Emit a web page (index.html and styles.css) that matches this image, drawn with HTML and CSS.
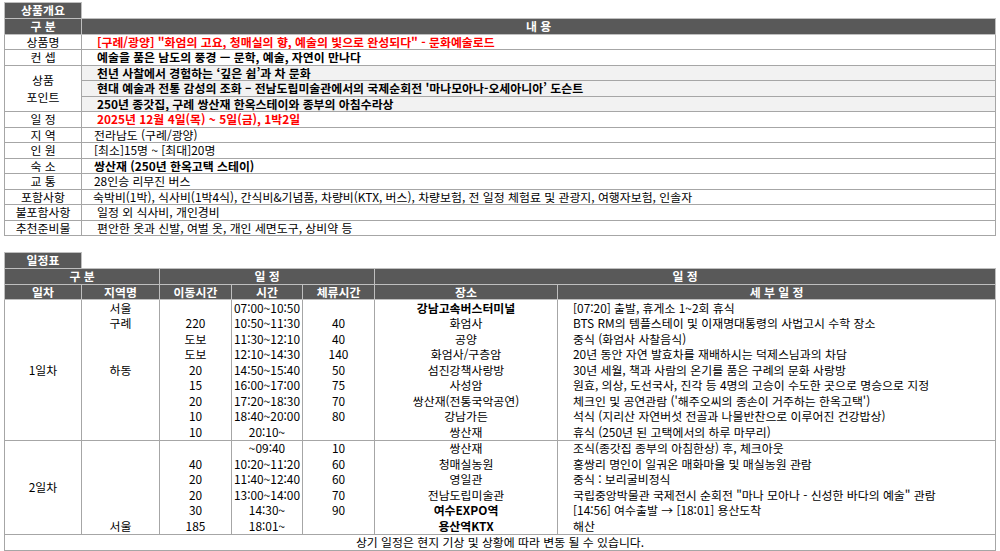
FILE: index.html
```html
<!DOCTYPE html>
<html lang="ko">
<head>
<meta charset="utf-8">
<title>상품개요</title>
<link rel="stylesheet" href="styles.css">
</head>
<body>
<div class="tab">상품개요</div>
<table class="summary">
  <colgroup><col class="c-label"><col></colgroup>
  <tr class="head"><th>구 분</th><th>내 용</th></tr>
  <tr><td class="label">상품명</td><td class="val red b">[구례/광양] "화엄의 고요, 청매실의 향, 예술의 빛으로 완성되다" - 문화예술로드</td></tr>
  <tr><td class="label">컨 셉</td><td class="val b">예술을 품은 남도의 풍경 — 문학, 예술, 자연이 만나다</td></tr>
  <tr><td class="label two" rowspan="3">상품<br>포인트</td><td class="val b shade">천년 사찰에서 경험하는 ‘깊은 쉼’과 차 문화</td></tr>
  <tr><td class="val b shade">현대 예술과 전통 감성의 조화 – 전남도립미술관에서의 국제순회전 '마나모아나-오세아니아’ 도슨트</td></tr>
  <tr><td class="val b shade">250년 종갓집, 구례 쌍산재 한옥스테이와 종부의 아침수라상</td></tr>
  <tr><td class="label">일 정</td><td class="val red b">2025년 12월 4일(목) ~ 5일(금), 1박2일</td></tr>
  <tr><td class="label">지 역</td><td class="val near">전라남도 (구례/광양)</td></tr>
  <tr><td class="label">인 원</td><td class="val near">[최소]15명 ~ [최대]20명</td></tr>
  <tr><td class="label">숙 소</td><td class="val near b">쌍산재 (250년 한옥고택 스테이)</td></tr>
  <tr><td class="label">교 통</td><td class="val near">28인승 리무진 버스</td></tr>
  <tr><td class="label">포함사항</td><td class="val nearer">숙박비(1박), 식사비(1박4식), 간식비&amp;기념품, 차량비(KTX, 버스), 차량보험, 전 일정 체험료 및 관광지, 여행자보험, 인솔자</td></tr>
  <tr><td class="label">불포함사항</td><td class="val">일정 외 식사비, 개인경비</td></tr>
  <tr><td class="label">추천준비물</td><td class="val">편안한 옷과 신발, 여벌 옷, 개인 세면도구, 상비약 등</td></tr>
</table>

<div class="tab tab2">일정표</div>
<table class="sched">
  <colgroup>
    <col class="w-day"><col class="w-area"><col class="w-move"><col class="w-time"><col class="w-stay"><col class="w-place"><col>
  </colgroup>
  <tr class="head"><th colspan="2">구 분</th><th colspan="3">일 정</th><th colspan="2">일 정</th></tr>
  <tr class="head"><th>일차</th><th>지역명</th><th>이동시간</th><th>시간</th><th>체류시간</th><th>장소</th><th>세 부 일 정</th></tr>

  <tr class="first"><td rowspan="9">1일차</td><td>서울</td><td></td><td>07:00~10:50</td><td></td><td class="b">강남고속버스터미널</td><td class="detail">[07:20] 출발, 휴게소 1~2회 휴식</td></tr>
  <tr><td>구례</td><td>220</td><td>10:50~11:30</td><td>40</td><td>화엄사</td><td class="detail">BTS RM의 템플스테이 및 이재명대통령의 사법고시 수학 장소</td></tr>
  <tr><td></td><td>도보</td><td>11:30~12:10</td><td>40</td><td>공양</td><td class="detail">중식 (화엄사 사찰음식)</td></tr>
  <tr><td></td><td>도보</td><td>12:10~14:30</td><td>140</td><td>화엄사/구층암</td><td class="detail">20년 동안 자연 발효차를 재배하시는 덕제스님과의 차담</td></tr>
  <tr><td>하동</td><td>20</td><td>14:50~15:40</td><td>50</td><td>섬진강책사랑방</td><td class="detail">30년 세월, 책과 사람의 온기를 품은 구례의 문화 사랑방</td></tr>
  <tr><td></td><td>15</td><td>16:00~17:00</td><td>75</td><td>사성암</td><td class="detail">원효, 의상, 도선국사, 진각 등 4명의 고승이 수도한 곳으로 명승으로 지정</td></tr>
  <tr><td></td><td>20</td><td>17:20~18:30</td><td>70</td><td>쌍산재(전통국악공연)</td><td class="detail">체크인 및 공연관람 ('해주오씨의 종손이 거주하는 한옥고택')</td></tr>
  <tr><td></td><td>10</td><td>18:40~20:00</td><td>80</td><td>강남가든</td><td class="detail">석식 (지리산 자연버섯 전골과 나물반찬으로 이루어진 건강밥상)</td></tr>
  <tr><td></td><td>10</td><td>20:10~</td><td></td><td>쌍산재</td><td class="detail">휴식 (250년 된 고택에서의 하루 마무리)</td></tr>

  <tr class="first"><td rowspan="6">2일차</td><td></td><td></td><td>~09:40</td><td>10</td><td>쌍산재</td><td class="detail">조식(종갓집 종부의 아침한상) 후, 체크아웃</td></tr>
  <tr><td></td><td>40</td><td>10:20~11:20</td><td>60</td><td>청매실농원</td><td class="detail">홍쌍리 명인이 일궈온 매화마을 및 매실농원 관람</td></tr>
  <tr><td></td><td>20</td><td>11:40~12:40</td><td>60</td><td>영일관</td><td class="detail">중식 : 보리굴비정식</td></tr>
  <tr><td></td><td>20</td><td>13:00~14:00</td><td>70</td><td>전남도립미술관</td><td class="detail">국립중앙박물관 국제전시 순회전 "마나 모아나 - 신성한 바다의 예술" 관람</td></tr>
  <tr><td></td><td>30</td><td>14:30~</td><td>90</td><td class="b">여수EXPO역</td><td class="detail">[14:56] 여수출발 → [18:01] 용산도착</td></tr>
  <tr><td>서울</td><td>185</td><td>18:01~</td><td></td><td class="b">용산역KTX</td><td class="detail">해산</td></tr>

  <tr class="first"><td colspan="7">상기 일정은 현지 기상 및 상황에 따라 변동 될 수 있습니다.</td></tr>
</table>
</body>
</html>
```

FILE: styles.css
```css
html, body {
  margin: 0;
  background: #ffffff;
}
body {
  padding: 2px 4px 0 4px;
  font-family: "Noto Sans CJK KR", "Noto Sans", sans-serif;
  font-size: 11.9px;
  color: #000000;
}
.tab {
  box-sizing: border-box;
  width: 78px;
  height: 16px;
  line-height: 14px;
  background: #595959;
  border: 1px solid #bfbfbf;
  border-bottom: none;
  color: #ffffff;
  font-weight: bold;
  text-align: center;
}
.tab2 {
  margin-top: 16px;
}
table {
  width: 992px;
  border-collapse: collapse;
  table-layout: fixed;
}
th, td {
  height: 14.5px;
  padding: 0;
  line-height: 14px;
  white-space: nowrap;
  overflow: hidden;
}
.head th {
  background: #595959;
  color: #ffffff;
  font-weight: bold;
  border: 1px solid #bfbfbf;
  text-align: center;
}
.summary td {
  border: 1px solid #a6a6a6;
}
.c-label { width: 77px; }
.label {
  text-align: center;
}
.label.two {
  line-height: 17px;
}
.val {
  padding-left: 15px;
}
.val.near { padding-left: 12px; }
.val.nearer { padding-left: 11px; }
.red { color: #ff0000; }
.b { font-weight: bold; }
.shade { background: #f2f2f2; }

.w-day { width: 77px; }
.w-area { width: 78px; }
.w-move { width: 72px; }
.w-time { width: 71px; }
.w-stay { width: 72px; }
.w-place { width: 183px; }

.sched td {
  height: 15.5px;
  border-left: 1px solid #a6a6a6;
  border-right: 1px solid #a6a6a6;
  text-align: center;
}
.sched tr.first td {
  border-top: 1px solid #a6a6a6;
}
.sched tr:last-child td {
  border-bottom: 1px solid #a6a6a6;
}
.sched td.detail {
  text-align: left;
  padding-left: 15px;
}
```
